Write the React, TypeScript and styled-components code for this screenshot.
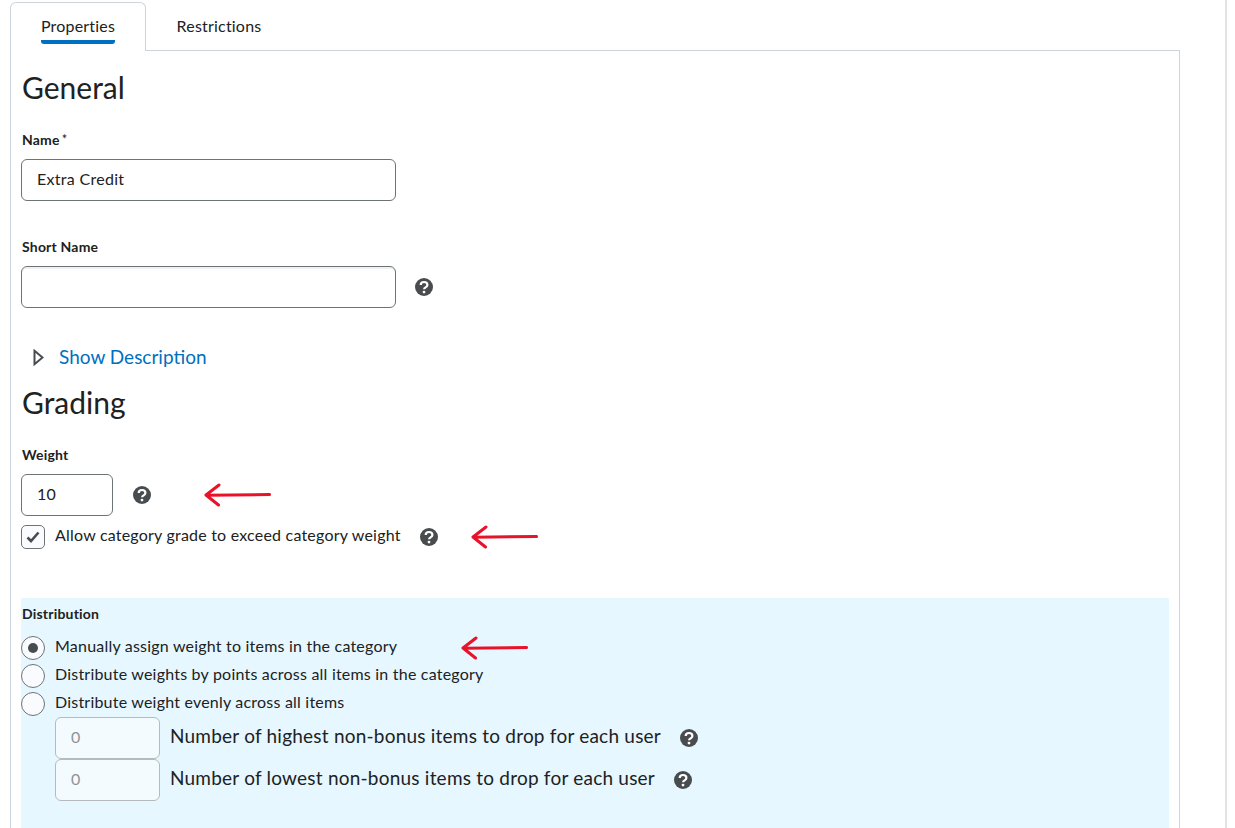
import styled, { createGlobalStyle } from "styled-components"

const GlobalStyle = createGlobalStyle`
  html, body {
    margin: 0;
    padding: 0;
    background: #fff;
    overflow: hidden;
  }
  * {
    box-sizing: border-box;
  }
  body {
    font-family: Lato, "Liberation Sans", sans-serif;
    color: #202122;
  }
`

const HelpIcon = () => (
  <HelpSvg viewBox="0 0 18 18" aria-hidden="true">
    <circle cx="9" cy="9" r="9" fill="#494c4e" />
    <path
      d="M5.7 7.1C5.7 5.2 7.2 4 9 4s3.4 1.1 3.4 2.9c0 2.5-3.3 2.4-3.3 4.4"
      fill="none"
      stroke="#fff"
      strokeWidth="2.2"
    />
    <circle cx="9" cy="14.1" r="1.4" fill="#fff" />
  </HelpSvg>
)

const RedArrow = () => (
  <ArrowSvg width="67" height="24" viewBox="0 0 67 24" aria-hidden="true">
    <path
      d="M65.5 11.6L3 12.2M15 2L2 12l12.5 10"
      fill="none"
      stroke="#e8132b"
      strokeWidth="3"
      strokeLinecap="round"
      strokeLinejoin="round"
    />
  </ArrowSvg>
)

export default function App() {
  return (
    <Page>
      <GlobalStyle />
      <Tabs>
        <Tab $active>
          <TabLabel $active>Properties</TabLabel>
        </Tab>
        <Tab>
          <TabLabel>Restrictions</TabLabel>
        </Tab>
      </Tabs>
      <Panel>
        <Heading>General</Heading>
        <FieldLabel $top={25}>
          Name<Required>*</Required>
        </FieldLabel>
        <TextBox $top={11} value="Extra Credit" readOnly />
        <FieldLabel $top={37}>Short Name</FieldLabel>
        <HelpRow $top={11}>
          <TextBox value="" readOnly $inset />
          <HelpSlot $left={19}>
            <HelpIcon />
          </HelpSlot>
        </HelpRow>
        <Disclosure>
          <Caret viewBox="0 0 11 17" aria-hidden="true">
            <path d="M1.5 1.8L9.5 8.5l-8 6.7z" fill="none" stroke="#494c4e" strokeWidth="2" />
          </Caret>
          <ShowLink>Show Description</ShowLink>
        </Disclosure>
        <Heading $top={13}>Grading</Heading>
        <FieldLabel $top={25}>Weight</FieldLabel>
        <HelpRow $top={11}>
          <WeightBox value="10" readOnly />
          <HelpSlot $left={20}>
            <HelpIcon />
          </HelpSlot>
          <ArrowSlot $left={53}>
            <RedArrow />
          </ArrowSlot>
        </HelpRow>
        <CheckRow>
          <CheckBox>
            <svg width="16" height="14" viewBox="0 0 16 14" aria-hidden="true">
              <path d="M2.5 7.5L6 11l7.5-8.5" fill="none" stroke="#494c4e" strokeWidth="2.6" />
            </svg>
          </CheckBox>
          <OptionText>Allow category grade to exceed category weight</OptionText>
          <HelpSlot $left={19}>
            <HelpIcon />
          </HelpSlot>
          <ArrowSlot $left={33}>
            <RedArrow />
          </ArrowSlot>
        </CheckRow>
        <Distribution>
          <DistributionTitle>Distribution</DistributionTitle>
          <RadioList>
            <RadioRow>
              <Radio $checked />
              <OptionText>Manually assign weight to items in the category</OptionText>
              <ArrowSlot $left={64}>
                <RedArrow />
              </ArrowSlot>
            </RadioRow>
            <RadioRow>
              <Radio />
              <OptionText>Distribute weights by points across all items in the category</OptionText>
            </RadioRow>
            <RadioRow>
              <Radio />
              <OptionText>Distribute weight evenly across all items</OptionText>
            </RadioRow>
          </RadioList>
          <DropList>
            <DropRow>
              <DropBox value="0" readOnly />
              <DropText>Number of highest non-bonus items to drop for each user</DropText>
              <HelpSlot $left={19}>
                <HelpIcon />
              </HelpSlot>
            </DropRow>
            <DropRow>
              <DropBox value="0" readOnly />
              <DropText>Number of lowest non-bonus items to drop for each user</DropText>
              <HelpSlot $left={19}>
                <HelpIcon />
              </HelpSlot>
            </DropRow>
          </DropList>
        </Distribution>
      </Panel>
    </Page>
  )
}

const Page = styled.div`
  width: 1227px;
  height: 828px;
  padding: 2px 0 0 10px;
  border-right: 2px solid #e3e3e3;
  overflow: hidden;
`

const Tabs = styled.div`
  display: flex;
  height: 48px;
  position: relative;
  z-index: 1;
`

const Tab = styled.div<{ $active?: boolean }>`
  width: ${(p) => (p.$active ? "136px" : "146px")};
  height: ${(p) => (p.$active ? "49px" : "48px")};
  display: flex;
  justify-content: center;
  background: #fff;
  border: ${(p) => (p.$active ? "1px solid #cdd5dc" : "1px solid transparent")};
  border-bottom: none;
  border-radius: 6px 6px 0 0;
`

const TabLabel = styled.div<{ $active?: boolean }>`
  height: 41px;
  padding-top: 13px;
  font-size: 16px;
  line-height: 20px;
  letter-spacing: 0.2px;
  color: #202122;
  border-bottom: ${(p) => (p.$active ? "4px solid #006fbf" : "none")};
  border-radius: 0 0 3px 3px;
`

const Panel = styled.div`
  width: 1170px;
  height: 790px;
  padding: 0 10px;
  border: 1px solid #cdd5dc;
`

const Heading = styled.h2<{ $top?: number }>`
  margin: ${(p) => p.$top ?? 17}px 0 0;
  padding-left: 1px;
  font-size: 30px;
  line-height: 38px;
  font-weight: 400;
  color: #202122;
`

const FieldLabel = styled.div<{ $top: number }>`
  margin-top: ${(p) => p.$top}px;
  padding-left: 1px;
  font-size: 14px;
  line-height: 17px;
  font-weight: 700;
  letter-spacing: 0.2px;
  color: #202122;
`

const Required = styled.span`
  margin-left: 2px;
  font-weight: 400;
  font-size: 13px;
  vertical-align: 1px;
  color: #202122;
`

const TextBox = styled.input<{ $top?: number; $inset?: boolean }>`
  display: block;
  width: 375px;
  height: 42px;
  margin-top: ${(p) => p.$top ?? 0}px;
  padding: 0 15px 3px;
  font: 400 16px Lato, sans-serif;
  letter-spacing: 0.3px;
  color: #202122;
  background: #fff;
  border: 1px solid #6e7376;
  border-radius: 6px;
  outline: none;
  box-shadow: ${(p) => (p.$inset ? "inset 0 2px 0 #f0f1f2" : "none")};
`

const WeightBox = styled(TextBox)`
  width: 92px;
`

const HelpRow = styled.div<{ $top: number }>`
  display: flex;
  align-items: center;
  margin-top: ${(p) => p.$top}px;
`

const HelpSlot = styled.span<{ $left: number }>`
  display: flex;
  margin-left: ${(p) => p.$left}px;
`

const HelpSvg = styled.svg`
  width: 18px;
  height: 18px;
  display: block;
`

const ArrowSlot = styled.span<{ $left: number }>`
  display: flex;
  margin-left: ${(p) => p.$left}px;
`

const ArrowSvg = styled.svg`
  display: block;
`

const Disclosure = styled.div`
  display: flex;
  align-items: center;
  margin: 36px 0 0 12px;
  height: 26px;
`

const Caret = styled.svg`
  width: 11px;
  height: 17px;
  margin-right: 15px;
`

const ShowLink = styled.span`
  font-size: 19px;
  line-height: 26px;
  color: #006fbf;
`

const CheckRow = styled.div`
  display: flex;
  align-items: center;
  height: 24px;
  margin-top: 9px;
`

const CheckBox = styled.span`
  flex: none;
  width: 24px;
  height: 24px;
  margin-right: 10px;
  display: flex;
  align-items: center;
  justify-content: center;
  background: #f9fbff;
  border: 1px solid #6e7376;
  border-radius: 5px;
`

const OptionText = styled.span`
  padding-bottom: 5px;
  font-size: 16px;
  line-height: 20px;
  color: #202122;
  letter-spacing: 0.21px;
`

const Distribution = styled.section`
  width: 1148px;
  height: 240px;
  margin-top: 49px;
  padding-top: 7px;
  background: #e6f7ff;
`

const DistributionTitle = styled.div`
  padding-left: 1px;
  font-size: 14px;
  line-height: 17px;
  font-weight: 700;
  letter-spacing: 0.2px;
  color: #202122;
`

const RadioList = styled.div`
  display: flex;
  flex-direction: column;
  gap: 4px;
  margin-top: 14px;
`

const RadioRow = styled.div`
  display: flex;
  align-items: center;
  height: 24px;
`

const Radio = styled.span<{ $checked?: boolean }>`
  flex: none;
  width: 24px;
  height: 24px;
  margin-right: 10px;
  display: flex;
  align-items: center;
  justify-content: center;
  background: #f9fbff;
  border: 1px solid #6e7376;
  border-radius: 50%;

  &::after {
    content: "";
    display: ${(p) => (p.$checked ? "block" : "none")};
    width: 10px;
    height: 10px;
    border-radius: 50%;
    background: #494c4e;
  }
`

const DropList = styled.div`
  display: flex;
  flex-direction: column;
  margin: 1px 0 0 34px;
`

const DropRow = styled.div`
  display: flex;
  align-items: center;
  height: 42px;
`

const DropBox = styled.input`
  width: 105px;
  height: 42px;
  padding: 0 15px 3px;
  font: 400 16px Lato, sans-serif;
  color: #8e9396;
  background: #f4fbff;
  border: 1px solid #b5babd;
  border-radius: 6px;
  outline: none;
`

const DropText = styled.span`
  margin-left: 10px;
  padding-bottom: 4px;
  font-size: 19px;
  line-height: 24px;
  letter-spacing: 0.22px;
  color: #202122;
`
